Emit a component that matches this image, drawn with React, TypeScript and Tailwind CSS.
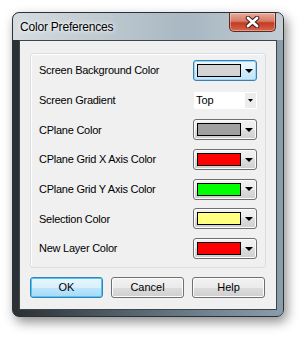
const rows: { label: string; kind: "color" | "combo"; color?: string; focused?: boolean }[] = [
  { label: "Screen Background Color", kind: "color", color: "#d4d4d4", focused: true },
  { label: "Screen Gradient", kind: "combo" },
  { label: "CPlane Color", kind: "color", color: "#a0a0a0" },
  { label: "CPlane Grid X Axis Color", kind: "color", color: "#ff0000" },
  { label: "CPlane Grid Y Axis Color", kind: "color", color: "#00ff00" },
  { label: "Selection Color", kind: "color", color: "#ffff80" },
  { label: "New Layer Color", kind: "color", color: "#ff0000" },
];

function ColorButton({ color, focused }: { color: string; focused?: boolean }) {
  return (
    <div
      className={
        focused
          ? "w-[64px] h-[21px] rounded-[3px] border border-[#3c7fb1] bg-[linear-gradient(#eaf6fd_0%,#e3f3fc_50%,#d0ebfb_50%,#c4e5f8_100%)] shadow-[inset_0_0_0_1px_#9ad6f5] flex items-center pl-[3px]"
          : "w-[64px] h-[21px] rounded-[3px] border border-[#707070] bg-[linear-gradient(#f2f2f2_0%,#ebebeb_50%,#dddddd_50%,#cfcfcf_100%)] shadow-[inset_0_0_0_1px_#fcfcfc] flex items-center pl-[3px]"
      }
    >
      <div className="w-[44px] h-[13px] border border-black" style={{ backgroundColor: color }} />
      <svg width="8" height="4" viewBox="0 0 8 4" className="ml-[4px]">
        <path d="M0 0H8L4 4Z" fill="#000" />
      </svg>
    </div>
  );
}

function Combo() {
  return (
    <div className="w-[63px] h-[17px] bg-white flex items-center">
      <span className="pl-[2px] text-[11px] text-black flex-1">Top</span>
      <div className="w-[11px] h-[15px] mr-[1px] bg-[#ececec] flex items-center justify-center">
        <svg width="5" height="3" viewBox="0 0 5 3">
          <path d="M0 0H5L2.5 3Z" fill="#000" />
        </svg>
      </div>
    </div>
  );
}

function Button({ label, primary }: { label: string; primary?: boolean }) {
  return (
    <div
      className={
        primary
          ? "w-[73px] h-[21px] rounded-[3px] border border-[#3c7fb1] bg-[linear-gradient(#eaf6fd_0%,#d9f0fc_50%,#bee6fd_50%,#a7d9f5_100%)] shadow-[inset_0_0_0_1px_#48c9f7] flex items-center justify-center text-[11px] text-black"
          : "w-[73px] h-[21px] rounded-[3px] border border-[#707070] bg-[linear-gradient(#f2f2f2_0%,#ebebeb_50%,#dddddd_50%,#cfcfcf_100%)] shadow-[inset_0_0_0_1px_#fcfcfc] flex items-center justify-center text-[11px] text-black"
      }
    >
      {label}
    </div>
  );
}

export default function App() {
  return (
    <div className="w-[303px] h-[337px] bg-white pt-[12px] pl-[12px] font-[family-name:'Liberation_Sans',Arial,sans-serif]">
      {/* Window glass frame */}
      <div className="w-[272px] h-[305px] rounded-[7px] border border-[#2b3135] shadow-[3px_5px_12px_rgba(0,0,0,0.45)] bg-[linear-gradient(to_right,#2a3034_0%,#48545c_30%,#6f818e_70%,#8a9daa_100%)] flex flex-col overflow-hidden">
        {/* Title bar */}
        <div className="h-[27px] flex items-start bg-[linear-gradient(to_right,#d6dce0_0%,#b9c5cd_40%,#a8b7c2_65%,#c2cdd4_100%)]">
          <span className="pl-[7px] pt-[7px] text-[12px] leading-[14px] text-black tracking-[-0.2px] [text-shadow:0_0_6px_#fff,0_0_3px_#fff]">
            Color Preferences
          </span>
          <div className="ml-auto mr-[7px] w-[47px] h-[19px] rounded-b-[5px] border border-t-0 border-[#5b2a24] bg-[linear-gradient(#e9a99a_0%,#d77c66_45%,#c23b22_55%,#d8664a_100%)] shadow-[inset_0_0_0_1px_rgba(255,255,255,0.35)] flex items-center justify-center">
            <svg width="15" height="12" viewBox="0 0 15 12">
              <path d="M3 2L12 10M12 2L3 10" stroke="#3a1a16" strokeWidth="4.6" strokeLinecap="round" />
              <path d="M3 2L12 10M12 2L3 10" stroke="#fff" strokeWidth="2.8" strokeLinecap="round" />
            </svg>
          </div>
        </div>

        {/* Client area */}
        <div className="mx-[6px] mb-[6px] flex-1 border border-[#3d464d] bg-[#f0f0f0] pl-[10px] pr-[10px] pt-[12px]">
          {/* Group box */}
          <div className="w-[236px] h-[215px] rounded-[3px] border border-[#d5dfe5] shadow-[inset_1px_1px_0_#fff] pl-[8px] pr-[8px] pt-[6px] flex flex-col gap-[8.7px]">
            {rows.map((r) => (
              <div key={r.label} className="h-[21px] flex items-center justify-between">
                <span className="text-[11px] tracking-[-0.25px] text-black">{r.label}</span>
                {r.kind === "combo" ? <Combo /> : <ColorButton color={r.color!} focused={r.focused} />}
              </div>
            ))}
          </div>

          {/* Buttons */}
          <div className="mt-[9px] flex gap-[8px]">
            <Button label="OK" primary />
            <Button label="Cancel" />
            <Button label="Help" />
          </div>
        </div>
      </div>
    </div>
  );
}
